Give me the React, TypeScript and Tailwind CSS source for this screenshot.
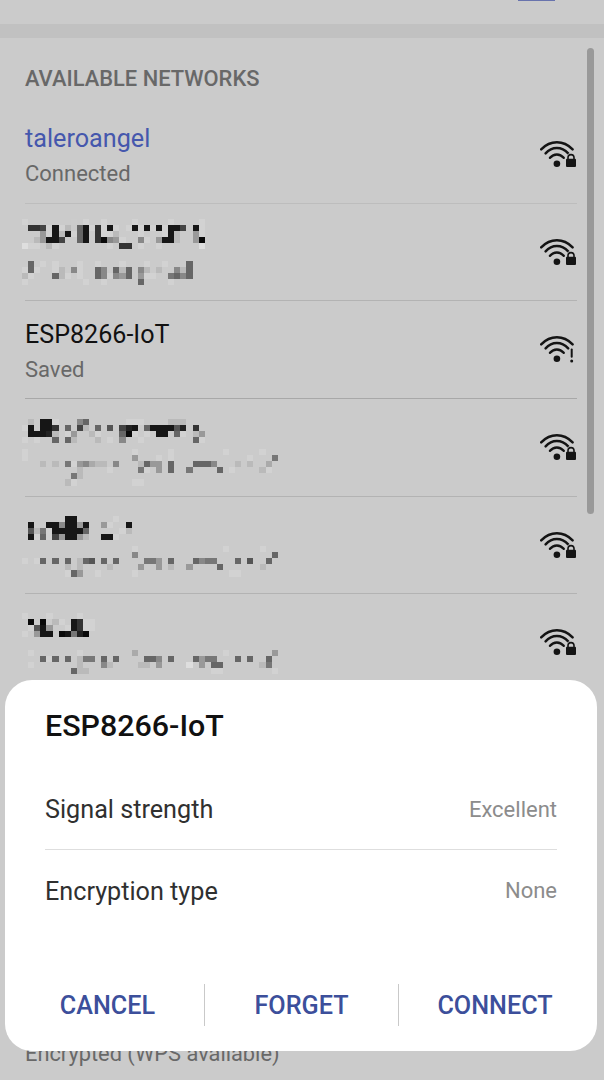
type MosaicRow = [number, string][];

/* Each cell is a column index and one hex digit of grey. */
const parse = (row: string): MosaicRow =>
  row
    .split(' ')
    .filter(Boolean)
    .map((cell) => {
      const [column, tone] = cell.split(':');
      return [Number(column), tone] as [number, string];
    });

/* The palest tones sit close to the page grey. */
const softTones: Record<string, string> = { b: '#bababa', d: '#d2d2d2', e: '#dedede', '1': '#161616', '0': '#0a0a0a' };

function Mosaic({ rows, className }: { rows: string[]; className: string }) {
  return (
    <svg
      className={className}
      width="270"
      height={rows.length * 6.1}
      viewBox={`0 0 270 ${rows.length * 6.1}`}
      shapeRendering="crispEdges"
      aria-hidden="true"
    >
      {rows.map((row, y) =>
        parse(row).map(([x, tone]) => (
          <rect key={`${y}-${x}`} x={x * 6.09} y={y * 6.1} width="6.1" height="6.1" fill={softTones[tone] ?? `#${tone}${tone}${tone}`} />
        )),
      )}
    </svg>
  );
}

const nameOne = [
  '0:d 8:c 10:d 13:d 18:d 24:d 29:d',
  '1:3 2:3 3:4 4:d 5:1 6:d 7:b 9:6 10:1 11:d 12:3 13:d 14:1 15:d 17:d 18:1 19:d 20:1 21:d 22:1 23:d 24:1 25:1 26:4 28:1 29:d',
  '3:9 4:d 5:1 6:b 7:1 8:d 9:6 10:1 12:3 13:d 14:d 15:b 19:d 23:d 24:1 25:b 28:9 29:d',
  '2:b 3:9 4:1 5:1 6:4 9:6 10:1 12:3 13:0 14:8 15:9 16:d 19:8 20:d 22:9 23:1 24:1 25:b 28:9 29:0',
  '0:e 1:d 2:d 4:b 5:d 14:d 16:3 17:3 19:d 22:d 29:e',
];
const stateOne = [
  '1:6 3:d 5:d 9:d 12:d 16:d 20:d 23:d 27:6',
  '0:d 1:6 2:d 5:d 6:b 8:8 9:d 12:6 13:8 15:6 16:b 17:6 19:8 20:b 22:b 25:8 26:b 27:6',
  '0:b 1:d 5:6 6:b 7:d 9:d 12:6 13:8 14:d 15:8 16:9 17:6 19:9 20:d 21:d 24:7 25:6 26:8 27:6',
  '0:d 10:d 13:d 19:6 24:d',
];
const nameTwo = [
  '1:b 3:1 4:1 5:d 9:8 10:6 17:d 18:d 19:d 24:b 25:b 26:b',
  '0:d 1:1 3:1 4:1 5:3 7:6 9:4 10:b 12:6 14:5 16:4 17:2 18:1 20:6 21:1 22:1 23:1 24:1 25:5 26:2 28:3',
  '1:1 2:1 3:1 4:2 5:b 7:d 8:9 11:b 12:d 16:6 17:0 18:d 20:d 22:1 23:1 25:6 26:d 28:b 29:9',
  '0:d 2:d 5:6 7:6 8:b 12:b 14:d 16:8 19:d 28:6 29:d',
];
const stateTwo = [
  '0:d 18:d 24:d 33:d 39:d',
  '0:d 18:9 22:d 24:d 37:d 41:7',
  '3:b 5:b 7:7 8:d 9:9 10:8 11:a 12:b 13:b 15:8 19:b 20:6 21:9 22:9 24:6 28:6 29:6 30:6 31:8 35:b 37:b 40:a',
  '9:b 14:d 19:7 20:d 22:9 24:6 27:7 32:6 34:d 39:b 40:d',
  '8:7 9:b',
  '7:b 8:d 18:d 19:d',
];
const nameThree = [
  '7:1 8:1 15:d',
  '1:1 4:1 5:1 6:8 7:1 8:1 9:9 10:1 13:9 14:d 17:1',
  '1:5 2:b 3:7 4:d 5:1 6:1 7:1 8:1 9:1 10:6 16:d 17:b',
  '1:1 2:d 3:6 4:d 5:4 6:9 7:1 8:1 9:9 10:b 13:1 14:1 15:d',
];
const stateThree = [
  '18:d 33:d 39:d',
  '18:8 41:6',
  '0:d 2:d 3:6 5:6 7:6 9:b 10:6 11:5 13:6 15:6 20:7 21:7 22:9 24:6 28:6 29:8 30:7 31:7 35:6 37:5 40:6',
  '7:b 9:b 14:b 19:9 22:9 24:b 27:9 32:6 39:b',
  '7:d 8:6 9:9 12:d 18:d 34:d 35:d',
];
const nameFour = [
  '0:d 4:d 9:d',
  '1:0 3:0 5:b 6:d 8:1 9:3 10:d 11:d',
  '1:d 2:5 3:1 4:9 7:d 8:1 9:3 10:d 11:d',
  '0:d 2:9 3:1 4:1 6:0 7:1 8:7 9:2 10:0',
];
const stateFour = [
  '1:d 9:d 18:a 33:d 41:9',
  '3:6 4:d 5:6 7:6 9:b 10:7 11:7 13:6 15:6 20:6 21:6 22:8 24:6 28:6 29:9 30:7 31:7 35:6 37:6 40:6',
  '1:d 9:b 13:8 14:b 19:b 20:b 22:9 27:e 29:9 31:6 32:6 39:b 40:7',
  '8:6 9:b 10:b 31:d 32:d 41:d',
];

function WifiIcon({ badge }: { badge: 'lock' | 'alert' }) {
  return (
    <svg className="mt-[33px] shrink-0" width="37" height="30" viewBox="0 -0.6 37 30" fill="none" stroke="#141414" strokeWidth="2.5" strokeLinecap="round">
      <path d="M1.2 9.7C10.4.3 23.4.3 32.6 9.7" />
      <path d="M5.6 13.8C12 6.7 21.7 6.7 28.2 13.8" />
      <path d="M10 18.2C13.9 13.7 19.8 13.7 23.7 18.2" />
      <circle cx="16.9" cy="24.2" r="3.3" fill="#141414" stroke="none" />
      {badge === 'lock' ? (
        <>
          <path d="M25.6 18.5L28.5 14H33.5L35 18.5Z" fill="#cbcbcb" stroke="none" />
          <rect x="26" y="19.2" width="10" height="8.2" rx="1" fill="#141414" stroke="none" />
          <path d="M28 20V18a3 3 0 0 1 6 0V20" strokeWidth="1.6" />
        </>
      ) : (
        <>
          <path d="M31.7 15V22.2" strokeWidth="2" />
          <circle cx="31.7" cy="26.3" r="1.5" fill="#141414" stroke="none" />
        </>
      )}
    </svg>
  );
}

function MaskedNetwork({ name, state, nameClass, stateClass }: { name: string[]; state: string[]; nameClass: string; stateClass: string }) {
  return (
    <li className="flex h-[97.7px] items-start justify-between border-b border-[#b3b3b3]">
      <div className="-ml-[3px] flex flex-col">
        <Mosaic rows={name} className={nameClass} />
        <Mosaic rows={state} className={stateClass} />
      </div>
      <WifiIcon badge="lock" />
    </li>
  );
}

function Network({ name, state, active = false, badge }: { name: string; state: string; active?: boolean; badge: 'lock' | 'alert' }) {
  return (
    <li className={active ? 'flex h-[97.7px] items-start justify-between border-b border-[#bdbdbd]' : 'flex h-[97.7px] items-start justify-between border-b border-[#a8a8a8]'}>
      <div className="pt-4">
        <div className={active ? 'text-[25.2px] leading-[33px] text-[#4557ad]' : 'text-[25.1px] leading-[36px] text-[#111]'}>{name}</div>
        <div className={active ? 'mt-1 text-[22px] leading-[30px] text-[#686868]' : 'mt-0.5 text-[22px] leading-[30px] text-[#686868]'}>{state}</div>
      </div>
      <WifiIcon badge={badge} />
    </li>
  );
}

function Detail({ label, value }: { label: string; value: string }) {
  return (
    <div className="flex h-[81px] items-center justify-between">
      <dt className="pt-0.5 text-[25.2px] text-[#303030]">{label}</dt>
      <dd className="text-[22px] text-[#8c8c8c]">{value}</dd>
    </div>
  );
}

export default function App() {
  return (
    <main className="relative h-[1080px] w-[604px] overflow-hidden bg-[#cbcbcb] font-['Roboto',sans-serif]">
      <header className="flex h-6 justify-end pr-[49px]">
        <div className="h-px w-[37px] bg-[#6873ad]" />
      </header>
      <div className="h-3.5 bg-[#c1c1c1]" />
      <section className="pr-[27px] pl-[25px]">
        <h2 className="h-[68px] pt-[25px] text-[21.9px] leading-[31px] font-medium text-[#686868]">AVAILABLE NETWORKS</h2>
        <ul>
          <Network name="taleroangel" state="Connected" active badge="lock" />
          <MaskedNetwork name={nameOne} state={stateOne} nameClass="mt-[15px]" stateClass="mt-3" />
          <Network name="ESP8266-IoT" state="Saved" badge="alert" />
          <MaskedNetwork name={nameTwo} state={stateTwo} nameClass="mt-5" stateClass="mt-[6px]" />
          <MaskedNetwork name={nameThree} state={stateThree} nameClass="mt-[19px]" stateClass="mt-[6px]" />
          <MaskedNetwork name={nameFour} state={stateFour} nameClass="mt-[19px]" stateClass="mt-3" />
        </ul>
        <p className="mt-[347px] text-[21.8px] leading-[30px] text-[#686868]">Encrypted (WPS available)</p>
      </section>
      <div className="absolute top-12 right-[10px] h-[466px] w-[7px] rounded-full bg-[#999]" />

      <div role="dialog" className="absolute top-[680px] left-[5px] flex h-[371px] w-[592px] flex-col rounded-[27px] bg-white px-10">
        <h1 className="mt-[26px] text-[30.4px] leading-10 font-medium text-[#111]">ESP8266-IoT</h1>
        <dl className="mt-[23px] divide-y divide-[#dedede]">
          <Detail label="Signal strength" value="Excellent" />
          <Detail label="Encryption type" value="None" />
        </dl>
        <div className="-mx-[35px] mt-[53px] flex h-[42px] items-center divide-x divide-[#c9c9c9] text-[25.2px] font-medium text-[#3c4f9b]">
          <button className="h-full w-[195px] pt-0.5 pl-px">CANCEL</button>
          <button className="h-full w-[194px] pt-0.5">FORGET</button>
          <button className="h-full flex-1 pt-0.5 pr-px">CONNECT</button>
        </div>
      </div>
    </main>
  );
}
